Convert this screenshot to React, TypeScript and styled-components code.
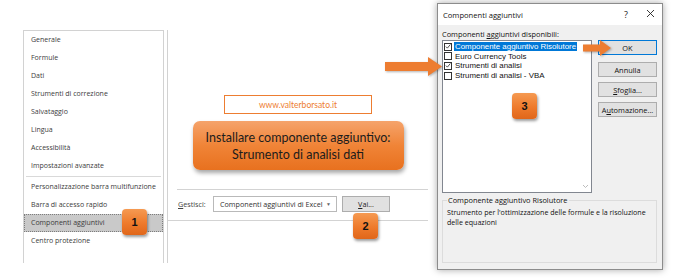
import React from "react";
import styled, { createGlobalStyle } from "styled-components";

const GlobalStyle = createGlobalStyle`
  * { box-sizing: border-box; }
  body {
    margin: 0;
    background: #ffffff;
  }
`;

// whole screenshot canvas
const Page = styled.div`
  position: relative;
  width: 678px;
  height: 279px;
  overflow: hidden;
  display: flex;
  align-items: flex-start;
  padding: 3px 0 0 23px;
  font-family: "Open Sans", "Noto Sans", sans-serif;
  color: #333;
`;

// ---------- Excel options sidebar ----------
const Sidebar = styled.nav`
  margin-top: 27px;
  width: 141px;
  height: 233px;
  border: 1px solid #d2d2d2;
  border-bottom: none;
`;

interface NavRowProps {
  $active?: boolean;
}
const NavRow = styled.div<NavRowProps>`
  height: 18px;
  line-height: 16px;
  padding-left: 6px;
  font-size: 7px;
  color: #3c3c3c;
  white-space: nowrap;
  border: 1px ${(p) => (p.$active ? "dotted #7d7d7d" : "solid transparent")};
  background: ${(p) => (p.$active ? "#c9c9c9" : "transparent")};
`;

const NavSeparator = styled.div`
  height: 1px;
  margin: 1px 2px 1px 2px;
  background: #d9d9d9;
`;

// ---------- central options panel ----------
const MainPanel = styled.section`
  margin-top: 27px;
  margin-left: 3px;
  width: 261px;
  height: 233px;
  border-left: 1px solid #d2d2d2;
  display: flex;
  flex-direction: column;
  align-items: center;
  padding-top: 65px;
`;

const WebBox = styled.div`
  width: 148px;
  height: 19px;
  border: 1px solid #ed7d31;
  display: flex;
  align-items: center;
  justify-content: center;
  font-family: Lato, "Open Sans", sans-serif;
  font-size: 8.5px;
  color: #ed7d31;
`;

const TitleBox = styled.div`
  margin-top: 7px;
  width: 211px;
  height: 49px;
  border-radius: 7px;
  background: linear-gradient(180deg, #f5a36b 0%, #f08437 50%, #e8711f 100%);
  box-shadow: 1px 3px 4px rgba(0, 0, 0, 0.35);
  display: flex;
  flex-direction: column;
  align-items: center;
  justify-content: center;
  font-family: Lato, "Open Sans", sans-serif;
  font-size: 12.5px;
  line-height: 17px;
  color: #1c1c1c;
`;

interface RuleProps {
  $inset: number;
  $top: number;
}
const Rule = styled.div<RuleProps>`
  align-self: stretch;
  margin-top: ${(p) => p.$top}px;
  margin-left: ${(p) => p.$inset}px;
  height: 1px;
  background: #d3d3d3;
`;

const ManageRow = styled.div`
  align-self: stretch;
  margin-top: 6px;
  padding-left: 10px;
  height: 16px;
  display: flex;
  align-items: center;
  font-size: 7.2px;
  color: #444;
`;

const ManageLabel = styled.span`
  width: 35px;
`;

const Select = styled.div`
  width: 124px;
  height: 16px;
  border: 1px solid #b9b9b9;
  background: #fff;
  display: flex;
  align-items: center;
  justify-content: space-between;
  padding: 0 5px 0 6px;
  color: #333;
`;

const Caret = styled.span`
  font-size: 5px;
  color: #666;
`;

const GoButton = styled.div`
  margin-left: 5px;
  width: 48px;
  height: 16px;
  border: 1px solid #adadad;
  background: #e1e1e1;
  display: flex;
  align-items: center;
  justify-content: center;
  color: #222;
`;

// ---------- add-ins dialog ----------
const Dialog = styled.div`
  margin-left: 9px;
  width: 226px;
  height: 267px;
  border: 1px solid #8c8c8c;
  background: #f0f0f0;
  box-shadow: 0 0 7px rgba(0, 0, 0, 0.35);
  display: flex;
  flex-direction: column;
  font-size: 7.4px;
  color: #111;
`;

const TitleBar = styled.div`
  height: 24px;
  background: #fff;
  display: flex;
  align-items: center;
  padding-left: 5px;
  font-size: 7.6px;
  color: #111;
`;

const TitleText = styled.span`
  flex: 1;
`;

const TitleGlyph = styled.span`
  width: 24px;
  text-align: center;
  font-size: 9px;
  color: #222;
`;

const DialogBody = styled.div`
  flex: 1;
  display: flex;
  flex-direction: column;
  padding: 0 5px 6px 4px;
`;

const ListLabel = styled.div`
  height: 15px;
  line-height: 15px;
  padding-top: 2px;
`;

const Columns = styled.div`
  display: flex;
  gap: 6px;
`;

const AddInList = styled.div`
  width: 150px;
  height: 153px;
  border: 1px solid #828790;
  background: #fff;
  display: flex;
  padding-top: 1px;
`;

const ListItems = styled.div`
  flex: 1;
  display: flex;
  flex-direction: column;
`;

const ListItem = styled.div`
  height: 9.6px;
  display: flex;
  align-items: center;
  gap: 2px;
  padding-left: 1px;
  font-family: "Liberation Sans", Arial, sans-serif;
  font-size: 7.9px;
  white-space: nowrap;
`;

const Check = styled.span`
  flex: none;
  width: 8px;
  height: 8px;
  border: 1px solid #333;
  background: #fff;
  display: flex;
  align-items: center;
  justify-content: center;
`;

interface ItemTextProps {
  $selected?: boolean;
}
const ItemText = styled.span<ItemTextProps>`
  padding: 0 1px;
  line-height: 9px;
  background: ${(p) => (p.$selected ? "#0078d7" : "transparent")};
  color: ${(p) => (p.$selected ? "#fff" : "#111")};
`;

const ScrollTrack = styled.div`
  width: 12px;
  display: flex;
  flex-direction: column;
  justify-content: flex-end;
  align-items: center;
  padding-bottom: 3px;
`;

const ButtonColumn = styled.div`
  display: flex;
  flex-direction: column;
  gap: 5px;
`;

interface DialogButtonProps {
  $default?: boolean;
}
const DialogButton = styled.div<DialogButtonProps>`
  width: 59px;
  height: 15px;
  border: 1px solid ${(p) => (p.$default ? "#0078d7" : "#adadad")};
  background: #e1e1e1;
  display: flex;
  align-items: center;
  justify-content: center;
  color: #111;
  &:first-child {
    margin-bottom: 2px;
  }
`;

const GroupBox = styled.fieldset`
  margin: 2px 0 0 0;
  height: 68px;
  border: 1px solid #dcdcdc;
  padding: 2px 4px 0 4px;
  min-width: 0;
`;

const GroupLegend = styled.legend`
  padding: 0 1px;
  line-height: 10px;
`;

const GroupText = styled.p`
  margin: 0;
  line-height: 10px;
  font-size: 7.1px;
  white-space: nowrap;
`;

// ---------- tutorial overlays ----------
interface SpotProps {
  $x: number;
  $y: number;
}
const Badge = styled.div<SpotProps>`
  position: absolute;
  left: ${(p) => p.$x}px;
  top: ${(p) => p.$y}px;
  width: 25px;
  height: 26px;
  border-radius: 4px;
  background: linear-gradient(180deg, #f59a52 0%, #ee7a2b 55%, #e0661a 100%);
  box-shadow: 1px 2px 3px rgba(0, 0, 0, 0.4);
  display: flex;
  align-items: center;
  justify-content: center;
  font-family: "Liberation Sans", Arial, sans-serif;
  font-weight: bold;
  font-size: 11px;
  color: #111;
`;

const Arrow = styled.svg<SpotProps>`
  position: absolute;
  left: ${(p) => p.$x}px;
  top: ${(p) => p.$y}px;
  filter: drop-shadow(1px 1px 1px rgba(0, 0, 0, 0.3));
`;

const U = styled.span`
  text-decoration: underline;
`;

const navTop = [
  "Generale",
  "Formule",
  "Dati",
  "Strumenti di correzione",
  "Salvataggio",
  "Lingua",
  "Accessibilità",
  "Impostazioni avanzate",
];
const navBottom = [
  "Personalizzazione barra multifunzione",
  "Barra di accesso rapido",
  "Componenti aggiuntivi",
  "Centro protezione",
];

const addIns = [
  { name: "Componente aggiuntivo Risolutore", checked: true, selected: true },
  { name: "Euro Currency Tools", checked: false },
  { name: "Strumenti di analisi", checked: true },
  { name: "Strumenti di analisi - VBA", checked: false },
];

const Tick = () => (
  <svg width="7" height="7" viewBox="0 0 7 7">
    <path d="M1 3.6 L2.8 5.4 L6.2 1.2" fill="none" stroke="#222" strokeWidth="0.9" />
  </svg>
);

export default function App() {
  return (
    <>
      <GlobalStyle />
      <Page>
        <Sidebar>
          {navTop.map((n) => (
            <NavRow key={n}>{n}</NavRow>
          ))}
          <NavSeparator />
          {navBottom.map((n) => (
            <NavRow key={n} $active={n === "Componenti aggiuntivi"}>
              {n}
            </NavRow>
          ))}
        </Sidebar>

        <MainPanel>
          <WebBox>www.valterborsato.it</WebBox>
          <TitleBox>
            <span>Installare componente aggiuntivo:</span>
            <span>Strumento di analisi dati</span>
          </TitleBox>
          <Rule $inset={9} $top={19} />
          <ManageRow>
            <ManageLabel>
              <U>G</U>estisci:
            </ManageLabel>
            <Select>
              <span>Componenti aggiuntivi di Excel</span>
              <Caret>▼</Caret>
            </Select>
            <GoButton>
              <span>
                <U>V</U>ai...
              </span>
            </GoButton>
          </ManageRow>
          <Rule $inset={0} $top={8} />
        </MainPanel>

        <Dialog>
          <TitleBar>
            <TitleText>Componenti aggiuntivi</TitleText>
            <TitleGlyph>?</TitleGlyph>
            <TitleGlyph>
              <svg width="9" height="9" viewBox="0 0 9 9">
                <path d="M1 1 L8 8 M8 1 L1 8" stroke="#222" strokeWidth="0.9" />
              </svg>
            </TitleGlyph>
          </TitleBar>
          <DialogBody>
            <ListLabel>
              Componenti <U>a</U>ggiuntivi disponibili:
            </ListLabel>
            <Columns>
              <AddInList>
                <ListItems>
                  {addIns.map((a) => (
                    <ListItem key={a.name}>
                      <Check>{a.checked && <Tick />}</Check>
                      <ItemText $selected={a.selected}>{a.name}</ItemText>
                    </ListItem>
                  ))}
                </ListItems>
                <ScrollTrack>
                  <svg width="7" height="5" viewBox="0 0 7 5">
                    <path d="M1 1 L3.5 3.5 L6 1" fill="none" stroke="#b5b5b5" strokeWidth="0.9" />
                  </svg>
                </ScrollTrack>
              </AddInList>
              <ButtonColumn>
                <DialogButton $default>OK</DialogButton>
                <DialogButton>Annulla</DialogButton>
                <DialogButton>
                  <span>
                    <U>S</U>foglia...
                  </span>
                </DialogButton>
                <DialogButton>
                  <span>
                    A<U>u</U>tomazione...
                  </span>
                </DialogButton>
              </ButtonColumn>
            </Columns>
            <GroupBox>
              <GroupLegend>Componente aggiuntivo Risolutore</GroupLegend>
              <GroupText>
                Strumento per l'ottimizzazione delle formule e la risoluzione
                <br />
                delle equazioni
              </GroupText>
            </GroupBox>
          </DialogBody>
        </Dialog>

        <Badge $x={122} $y={209}>1</Badge>
        <Badge $x={353} $y={213}>2</Badge>
        <Badge $x={512} $y={93}>3</Badge>

        <Arrow $x={385} $y={57} width="58" height="19" viewBox="0 0 58 19">
          <path d="M0 5 H43 V0 L57 9.5 L43 19 V14 H0 Z" fill="#ed7d31" />
        </Arrow>
        <Arrow $x={583} $y={40} width="28" height="16" viewBox="0 0 28 16">
          <path d="M0 4.5 H17 V0 L28 8 L17 16 V11.5 H0 Z" fill="#ed7d31" />
        </Arrow>
      </Page>
    </>
  );
}
